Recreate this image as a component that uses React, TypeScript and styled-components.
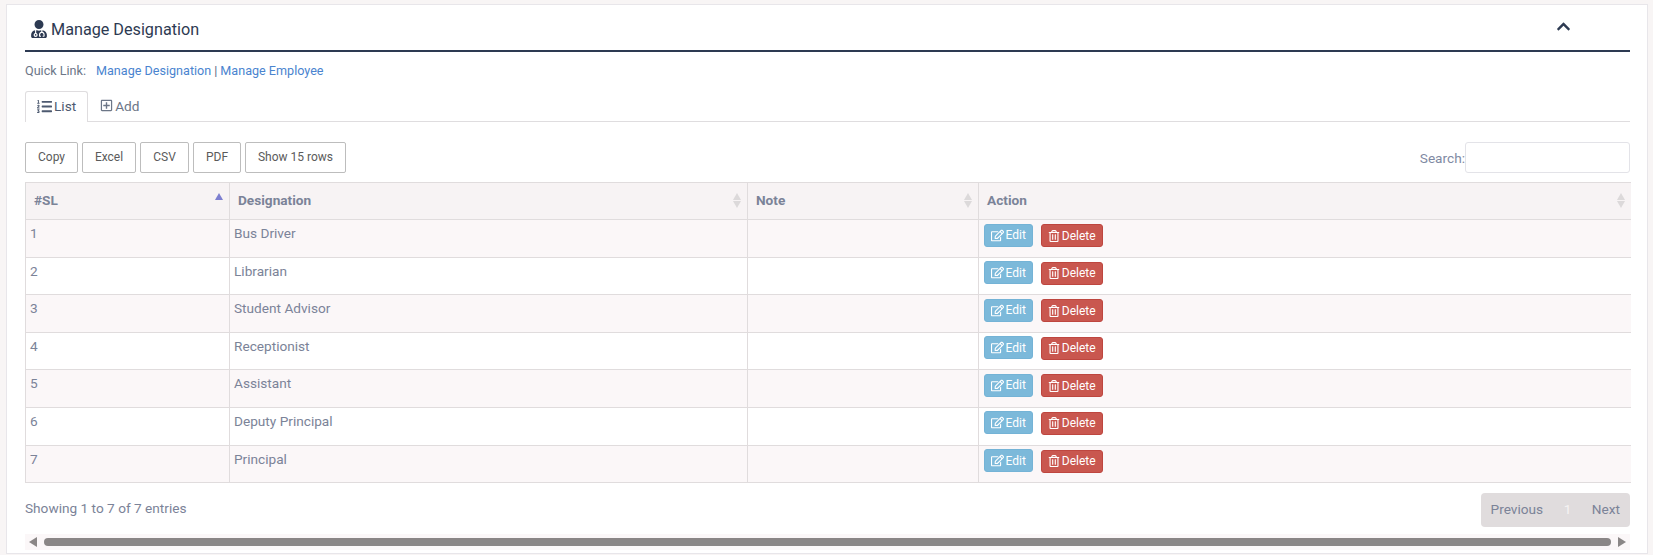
import styled, { createGlobalStyle } from "styled-components";
import { FaChevronUp, FaListOl, FaRegEdit, FaRegPlusSquare, FaRegTrashAlt, FaUserMd } from "react-icons/fa";

const GlobalStyle = createGlobalStyle`
  html, body {
    margin: 0;
    padding: 0;
    background-color: #f8f5f5;
    font-family: Roboto, "Liberation Sans", sans-serif;
  }
  * {
    box-sizing: border-box;
  }
`;

const Page = styled.div`
  width: 1653px;
  height: 555px;
  padding: 4px 5px 1px 6px;
`;

const Panel = styled.div`
  height: 100%;
  padding: 0 17px 0 18px;
  background-color: #fff;
  border: 1px solid #e8e6ea;
`;

const PanelHeader = styled.div`
  display: flex;
  align-items: center;
  justify-content: space-between;
  height: 47px;
  padding: 3px 59px 0 5px;
  border-bottom: 2px solid #2d3a52;
  color: #2d3a52;
`;

const PanelTitle = styled.h1`
  display: flex;
  align-items: center;
  gap: 3px;
  margin: 0;
  font-size: 16.2px;
  font-weight: 400;
`;

const Collapse = styled.span`
  display: flex;
  margin-bottom: 5px;
`;

const QuickLinks = styled.div`
  display: flex;
  height: 39px;
  padding-top: 10px;
  font-size: 12.6px;
  line-height: 18px;
  color: #6c7687;
`;

const QuickLabel = styled.span`
  margin-right: 10px;
`;

const QuickLink = styled.a`
  color: #4a84cf;
`;

const Divider = styled.span`
  margin: 0 3px;
  color: #5d6a86;
`;

const Tabs = styled.div`
  display: flex;
  height: 31px;
  border-bottom: 1px solid #dfdddf;
`;

const Tab = styled.div<{ $active?: boolean }>`
  display: flex;
  align-items: center;
  gap: 2px;
  height: ${(p) => (p.$active ? "31px" : "30px")};
  padding: 0 11px 2px;
  font-size: 13.65px;
  color: ${(p) => (p.$active ? "#4d5a70" : "#6c7687")};
  background-color: #fff;
  border: ${(p) => (p.$active ? "1px solid #dfdddf" : "1px solid transparent")};
  border-bottom: none;
  border-radius: 3px 3px 0 0;
`;

const Toolbar = styled.div`
  display: flex;
  align-items: center;
  justify-content: space-between;
  margin-top: 20px;
`;

const ExportButtons = styled.div`
  display: flex;
  gap: 4px;
`;

const ExportButton = styled.button<{ $width: number }>`
  width: ${(p) => p.$width}px;
  height: 31px;
  padding: 0 0 2px;
  font-family: inherit;
  font-size: 12px;
  color: #5b5b5b;
  background-color: #fff;
  border: 1px solid #bdbdbd;
  border-radius: 2px;
`;

const SearchBox = styled.label`
  display: flex;
  align-items: center;
  font-size: 13.65px;
  color: #7f8aa3;
`;

const SearchInput = styled.input`
  width: 165px;
  height: 31px;
  background-color: #fff;
  border: 1px solid #e3e3e8;
  border-radius: 3px;
`;

const Table = styled.table`
  width: 1605px;
  margin-top: 9px;
  table-layout: fixed;
  border-collapse: collapse;
  font-size: 13.65px;
`;

const HeadCell = styled.th`
  position: relative;
  height: 37px;
  padding: 0 8px 2px;
  font-size: 13.65px;
  font-weight: 700;
  text-align: left;
  color: #7b8398;
  background-color: #f7f3f4;
  border: 1px solid #e0dcdd;
  &:first-child { border-left-color: #dcdcdc; }
  &:last-child { border-right: none; }
`;

const SortArrows = styled.span`
  position: absolute;
  top: 10px;
  right: 6px;
  display: flex;
  flex-direction: column;
  gap: 1px;
`;

const Arrow = styled.i<{ $down?: boolean; $color: string }>`
  display: block;
  width: 0;
  height: 0;
  border-left: 4px solid transparent;
  border-right: 4px solid transparent;
  border-${(p) => (p.$down ? "top" : "bottom")}: 7px solid ${(p) => p.$color};
`;

const Row = styled.tr`
  &:nth-child(odd) { background-color: #fbf7f8; }
  &:nth-child(even) { background-color: #fff; }
`;

const Cell = styled.td`
  height: 37.6px;
  padding: 3px 4px 0;
  vertical-align: top;
  line-height: 20px;
  color: #7b8398;
  border: 1px solid #e0dcdd;
  &:last-child { border-right: none; }
`;

const ActionButton = styled.a<{ $danger?: boolean }>`
  display: inline-flex;
  align-items: center;
  gap: 2px;
  height: 23px;
  margin: 0.5px 7.5px 0 0.5px;
  padding: 0 6px;
  font-size: 12px;
  color: #fff;
  background-color: ${(p) => (p.$danger ? "#c9574f" : "#7cb9da")};
  border: 1px solid ${(p) => (p.$danger ? "#be463f" : "#74b3d6")};
  border-radius: 3px;
`;

const Footer = styled.div`
  display: flex;
  align-items: center;
  justify-content: space-between;
  margin-top: 10px;
`;

const EntriesInfo = styled.div`
  padding-bottom: 5px;
  font-size: 13.65px;
  color: #7b8398;
`;

const Pagination = styled.div`
  display: flex;
  align-items: center;
  height: 34px;
  padding: 0 10px 2px;
  font-size: 13.65px;
  color: #7b8398;
  background-color: #e0dcdd;
  border-radius: 4px;
`;

const PageNumber = styled.span`
  margin: 0 20.5px;
  color: #f5f3f3;
`;

const ScrollTrack = styled.div`
  display: flex;
  align-items: center;
  gap: 7px;
  height: 16px;
  margin-top: 7px;
  padding: 0 4px;
  background-color: #fbf7f8;
`;

const ScrollThumb = styled.div`
  flex: 1;
  height: 8px;
  background-color: #8a8686;
  border-radius: 4px;
`;

const ScrollArrow = styled.i<{ $right?: boolean }>`
  display: block;
  width: 0;
  height: 0;
  border-top: 5px solid transparent;
  border-bottom: 5px solid transparent;
  border-${(p) => (p.$right ? "left" : "right")}: 8px solid #8a8686;
`;

const designations = [
  "Bus Driver",
  "Librarian",
  "Student Advisor",
  "Receptionist",
  "Assistant",
  "Deputy Principal",
  "Principal",
];

const exportButtons = [
  { label: "Copy", width: 53 },
  { label: "Excel", width: 54 },
  { label: "CSV", width: 49 },
  { label: "PDF", width: 48 },
  { label: "Show 15 rows", width: 101 },
];

const columns = [
  { label: "#SL", width: 204, sorted: true },
  { label: "Designation", width: 518 },
  { label: "Note", width: 231 },
  { label: "Action", width: 652 },
];

export default function App() {
  return (
    <Page>
      <GlobalStyle />
      <Panel>
        <PanelHeader>
          <PanelTitle>
            <FaUserMd size={18} />
            Manage Designation
          </PanelTitle>
          <Collapse>
            <FaChevronUp size={15} />
          </Collapse>
        </PanelHeader>
        <QuickLinks>
          <QuickLabel>Quick Link:</QuickLabel>
          <QuickLink>Manage Designation</QuickLink>
          <Divider>|</Divider>
          <QuickLink>Manage Employee</QuickLink>
        </QuickLinks>
        <Tabs>
          <Tab $active>
            <FaListOl size={15} />
            List
          </Tab>
          <Tab>
            <FaRegPlusSquare size={13} />
            Add
          </Tab>
        </Tabs>
        <Toolbar>
          <ExportButtons>
            {exportButtons.map((b) => (
              <ExportButton key={b.label} $width={b.width}>{b.label}</ExportButton>
            ))}
          </ExportButtons>
          <SearchBox>
            Search:
            <SearchInput />
          </SearchBox>
        </Toolbar>
        <Table>
          <colgroup>
            {columns.map((c) => (
              <col key={c.label} width={c.width} />
            ))}
          </colgroup>
          <thead>
            <tr>
              {columns.map((c) => (
                <HeadCell key={c.label}>
                  {c.label}
                  <SortArrows>
                    <Arrow $color={c.sorted ? "#7d7fd0" : "#dcd9da"} />
                    <Arrow $down $color={c.sorted ? "transparent" : "#dcd9da"} />
                  </SortArrows>
                </HeadCell>
              ))}
            </tr>
          </thead>
          <tbody>
            {designations.map((name, i) => (
              <Row key={name}>
                <Cell>{i + 1}</Cell>
                <Cell>{name}</Cell>
                <Cell />
                <Cell>
                  <ActionButton><FaRegEdit size={13} /> Edit</ActionButton>
                  <ActionButton $danger><FaRegTrashAlt size={12} /> Delete</ActionButton>
                </Cell>
              </Row>
            ))}
          </tbody>
        </Table>
        <Footer>
          <EntriesInfo>Showing 1 to 7 of 7 entries</EntriesInfo>
          <Pagination>
            Previous
            <PageNumber>1</PageNumber>
            Next
          </Pagination>
        </Footer>
        <ScrollTrack>
          <ScrollArrow />
          <ScrollThumb />
          <ScrollArrow $right />
        </ScrollTrack>
      </Panel>
    </Page>
  );
}
